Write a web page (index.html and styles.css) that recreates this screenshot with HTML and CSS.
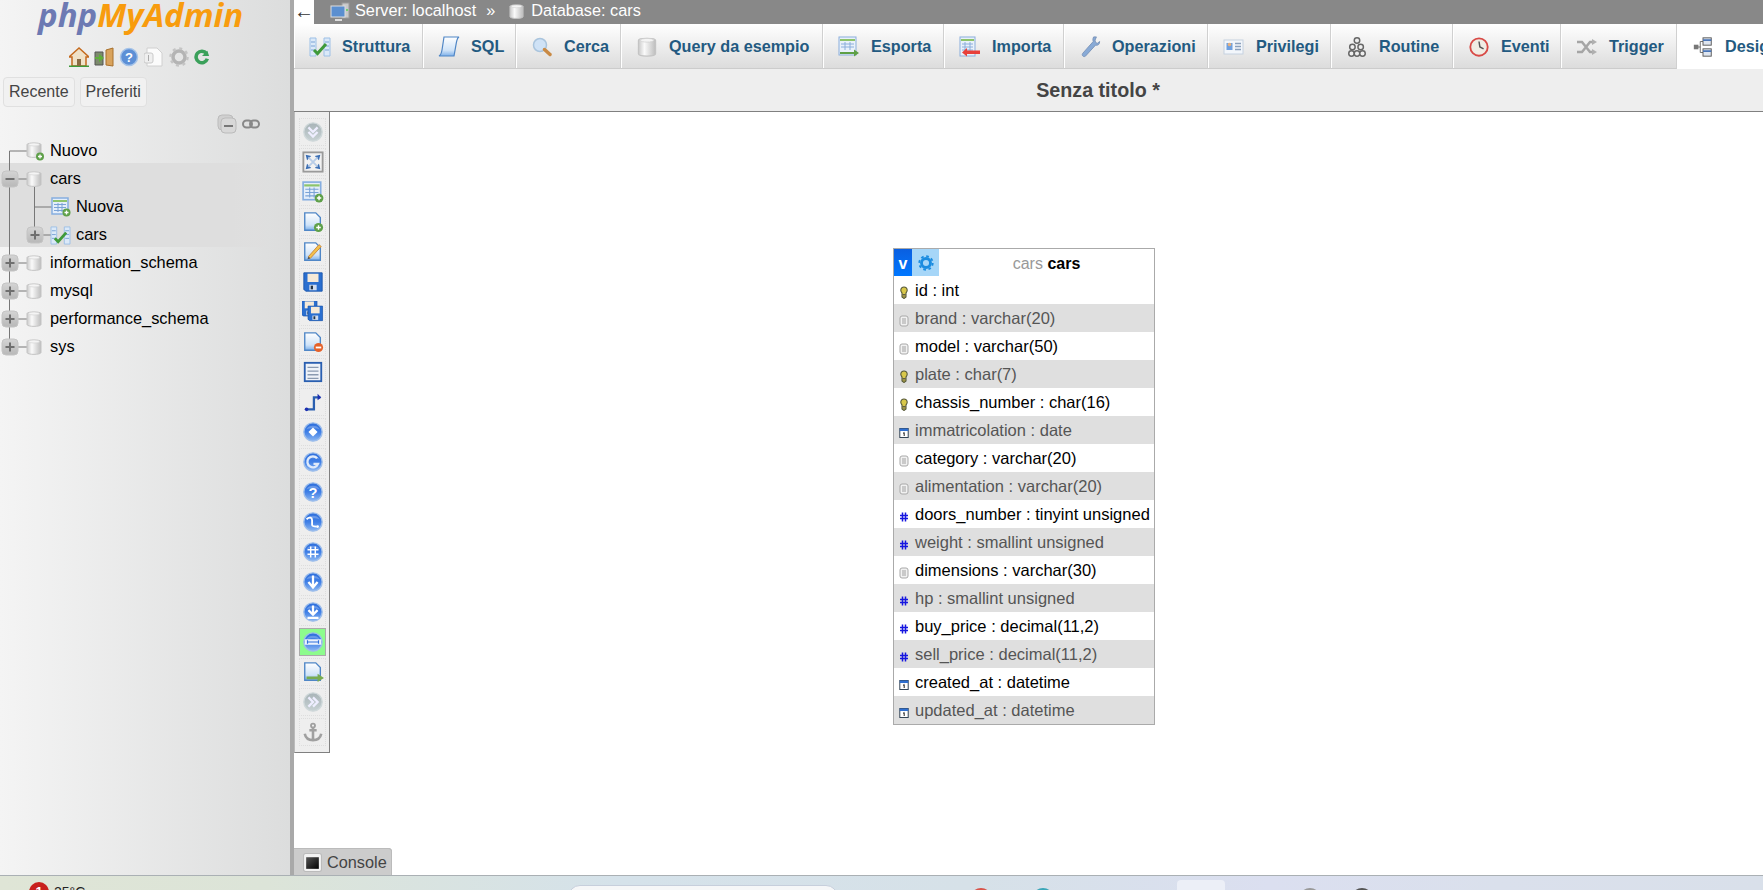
FILE: index.html
```html
<!DOCTYPE html>
<html lang="it">
<head>
<meta charset="utf-8">
<title>phpMyAdmin Designer</title>
<link rel="stylesheet" href="styles.css">
</head>
<body>
<svg class="defs" aria-hidden="true">
  <defs>
    <linearGradient id="gDb" x1="0" x2="1" y1="0" y2="0"><stop offset="0" stop-color="#c9c9c9"/><stop offset=".35" stop-color="#fafafa"/><stop offset="1" stop-color="#bdbdbd"/></linearGradient>
    <linearGradient id="gBall" x1="0" x2="0" y1="0" y2="1"><stop offset="0" stop-color="#2f6fdc"/><stop offset=".5" stop-color="#3f7fe6"/><stop offset="1" stop-color="#8db8f2"/></linearGradient>
    <linearGradient id="gGrey" x1="0" x2="0" y1="0" y2="1"><stop offset="0" stop-color="#a8b4b8"/><stop offset="1" stop-color="#c8d2d4"/></linearGradient>
    <linearGradient id="gPage" x1="0" x2="0" y1="0" y2="1"><stop offset="0" stop-color="#fff"/><stop offset=".7" stop-color="#cfe3f8"/><stop offset="1" stop-color="#7db0ea"/></linearGradient>
    <linearGradient id="gBox" x1="0" x2="0" y1="0" y2="1"><stop offset="0" stop-color="#d4d4d4"/><stop offset="1" stop-color="#b8b8b8"/></linearGradient>
    <linearGradient id="gCons" x1="0" x2="1" y1="0" y2="1"><stop offset="0" stop-color="#555"/><stop offset="1" stop-color="#000"/></linearGradient>
    <symbol id="db" viewBox="0 0 16 18"><path d="M1 3.500C1 1.500 15 1.500 15 3.500V14.500C15 17 1 17 1 14.500Z" fill="url(#gDb)" stroke="#c4c4c4"/><ellipse cx="8" cy="3.500" rx="5.500" ry="1.500" fill="#f4f4f4" stroke="#d0d0d0" stroke-width=".6"/></symbol>
    <symbol id="dbnew" viewBox="0 0 18 20"><path d="M1 3.500C1 1.500 15 1.500 15 3.500V14.500C15 17 1 17 1 14.500Z" fill="url(#gDb)" stroke="#c4c4c4"/><ellipse cx="8" cy="3.500" rx="5.500" ry="1.500" fill="#f4f4f4" stroke="#d0d0d0" stroke-width=".6"/><circle cx="14" cy="15.500" r="4" fill="#5fa04a"/><path d="M12 15.500h4M14 13.500v4" stroke="#fff" stroke-width="1.300"/></symbol>
    <symbol id="plus" viewBox="0 0 18 18"><rect x="1" y="1" width="16" height="16" rx="4" fill="url(#gBox)" stroke="#c4c4c4"/><path d="M4.500 9h9M9 4.500v9" stroke="#6f6f6f" stroke-width="2"/></symbol>
    <symbol id="minus" viewBox="0 0 18 18"><rect x="1" y="1" width="16" height="16" rx="4" fill="url(#gBox)" stroke="#c4c4c4"/><path d="M4.500 9h9" stroke="#6f6f6f" stroke-width="2"/></symbol>
    <symbol id="tblnew" viewBox="0 0 20 20"><rect x="1" y="1" width="16" height="16" fill="#e4eefa" stroke="#86aee0" stroke-width="1.500"/><path d="M2 4h14" stroke="#8dc46b" stroke-width="2"/><path d="M3 7.500h12M3 10.500h12M3 13.500h12M7 6v9M11 6v9" stroke="#7aa3d6"/><circle cx="15.500" cy="15.500" r="4" fill="#5fa04a"/><path d="M13.500 15.500h4M15.500 13.500v4" stroke="#fff" stroke-width="1.300"/></symbol>
    <symbol id="struct" viewBox="0 0 22 20"><path d="M1 1h6v18H1zM15 1h6v18h-6z" fill="#dbe9f8" stroke="#9dc0e6"/><path d="M2 5h4M2 9h4M2 13h4M16 5h4M16 9h4M16 13h4" stroke="#7aa3d6"/><path d="M5 13l3.500 3.500L17 7" fill="none" stroke="#3f9a3a" stroke-width="3"/></symbol>
    <symbol id="sql" viewBox="0 0 22 22"><path d="M6 1h15c-2 1-2 3-2.500 5L16 20H1c2-1 2.500-3 3-6Z" fill="url(#gPage)" stroke="#4f86c6" stroke-width="1.200"/></symbol>
    <symbol id="search" viewBox="0 0 22 22"><circle cx="9" cy="9" r="6.500" fill="#cfe2f6" stroke="#a9c4dd" stroke-width="1.500"/><path d="M13.500 13.500l5.500 5" stroke="#c98a45" stroke-width="3.500" stroke-linecap="round"/></symbol>
    <symbol id="export" viewBox="0 0 22 22"><rect x="1" y="1" width="17" height="18" fill="#e9f1fa" stroke="#8aaedb"/><path d="M2 4h15" stroke="#8dc46b" stroke-width="2"/><path d="M3 8h13M3 11h13M7 6v8M12 6v8" stroke="#8aaedb"/><path d="M2 16h14v-2.500l5 3.500-5 3.500V18H2z" fill="#5fa046"/></symbol>
    <symbol id="import" viewBox="0 0 22 22"><rect x="1" y="1" width="15" height="19" fill="#e9f1fa" stroke="#8aaedb"/><path d="M2 4h13" stroke="#8dc46b" stroke-width="2"/><path d="M3 8h11M3 11h11M3 14h11M6 6v12M11 6v12" stroke="#8aaedb"/><path d="M21 11v3.500h-13V12l-5 4.500 5 4V18h13z" fill="#e8403a"/></symbol>
    <symbol id="wrench" viewBox="0 0 22 24"><path d="M15 1c-1 2-1 3-.5 5L3 19c-1.500 2 1 4.500 3 3L17 10c3 .5 4.500-1 4.500-4L19 8l-2-1-.5-2.500L18 1Z" fill="#88aad6" stroke="#7a93b8"/></symbol>
    <symbol id="priv" viewBox="0 0 22 20"><rect x="1" y="3" width="19" height="14" fill="#f2f6fb" stroke="#c6d2e0"/><rect x="3.500" y="6" width="6" height="7" fill="#6fa0df"/><circle cx="6.500" cy="7.500" r="1.800" fill="#e7b17e"/><path d="M12 6.500h6M12 9.500h6M12 12.500h6" stroke="#8aa0bc" stroke-width="1.300"/></symbol>
    <symbol id="gears" viewBox="0 0 22 24"><g fill="#eee" stroke="#666" stroke-width="1.600"><circle cx="11" cy="5" r="3"/><circle cx="6" cy="12" r="3"/><circle cx="15" cy="12" r="3"/><circle cx="5" cy="19" r="3"/><circle cx="11" cy="19" r="3"/><circle cx="17" cy="19" r="3"/></g></symbol>
    <symbol id="clock" viewBox="0 0 22 24"><circle cx="11" cy="12" r="9.500" fill="#f0ece4" stroke="#d84a46" stroke-width="2"/><path d="M11 6l1 6 4 2" fill="none" stroke="#555" stroke-width="1.600"/></symbol>
    <symbol id="trigger" viewBox="0 0 22 20"><path d="M1 5h5l8 10h3M1 15h5l8-10h3" fill="none" stroke="#a5a5a5" stroke-width="2.500"/><path d="M16 2l5 3-5 3zM16 12l5 3-5 3z" fill="#b0b0b0"/></symbol>
    <symbol id="design" viewBox="0 0 22 24"><path d="M4 12h4M8 6v12M8 6h4M8 18h4" stroke="#666" fill="none"/><rect x="1" y="9.500" width="5" height="5" fill="#777"/><rect x="11" y="2" width="9" height="8" fill="#dfe6f0" stroke="#555"/><rect x="11" y="14" width="9" height="8" fill="#dfe6f0" stroke="#555"/><path d="M11 4.500h9M11 16.500h9" stroke="#4a76b8" stroke-width="2"/></symbol>
    <symbol id="ball" viewBox="0 0 24 24"><circle cx="12" cy="12" r="10" fill="url(#gBall)" stroke="#9dbdea" stroke-width="1.500"/><path d="M5 9c2-5 12-5 14 0-4-1.500-10-1.500-14 0z" fill="#fff" fill-opacity=".25"/></symbol>
    <symbol id="gball" viewBox="0 0 24 24"><circle cx="12" cy="12" r="10" fill="url(#gGrey)" stroke="#cfd8da" stroke-width="1.500"/></symbol>
    <symbol id="page" viewBox="0 0 24 24"><path d="M3 2h12l5 5v14H3z" fill="url(#gPage)" stroke="#4f86c6" stroke-width="1.500"/></symbol>
    <symbol id="floppy" viewBox="0 0 24 24"><path d="M2 2h20v20H4l-2-2z" fill="#2a6fd0" stroke="#1c56ac"/><rect x="6" y="3" width="12" height="9" fill="#f5e9d7"/><rect x="8" y="15" width="8" height="6" fill="#cfdcef"/><rect x="9.500" y="16" width="2.500" height="4" fill="#234"/></symbol>
    <symbol id="keyf" viewBox="0 0 10 13"><path d="M5 1a3.200 3.200 0 0 1 3.200 3.300c0 1.300-.7 2-1.200 2.700v4L5 12.500 3 11V7C2.500 6.300 1.800 5.600 1.800 4.300A3.200 3.200 0 0 1 5 1z" fill="#d9c84a" stroke="#55583a" stroke-width="1.100"/><path d="M3.500 8.500h3M3.500 10h3" stroke="#444" stroke-width=".8"/></symbol>
    <symbol id="txtf" viewBox="0 0 10 13"><rect x="1" y="2" width="8" height="10" rx="2" fill="#f1f1f1" stroke="#a9a9a9"/><path d="M3 5h4M3 7h4M3 9h4" stroke="#999" stroke-width=".9"/></symbol>
    <symbol id="numf" viewBox="0 0 10 13"><path d="M3.500 2.500v9M6.500 2.500v9M1 5.500h8M1 8.500h8" stroke="#1616e0" stroke-width="1.500"/></symbol>
    <symbol id="datef" viewBox="0 0 10 13"><rect x=".8" y="2.500" width="8.400" height="9" fill="#fff" stroke="#345"/><rect x=".8" y="2.500" width="8.400" height="2.500" fill="#2f6fd0"/><path d="M5.200 6.500v3.500M4 7.500l1.200-1" stroke="#222" stroke-width="1"/></symbol>
  </defs>
</svg>

<div class="app">
  <aside class="sidebar">
    <div class="logo"><span class="logo-php">php</span><span class="logo-my">MyAdmin</span></div>
    <div class="quick">
      <svg class="q-icon" viewBox="0 0 20 20"><path d="M10 1L0 10h3v9h14v-9h3z" fill="#f0e2c8" stroke="#c46a1e" stroke-width="1.500"/><path d="M0 19.500h20" stroke="#3f9a3a" stroke-width="2"/><rect x="8" y="12" width="4" height="7" fill="#8a6a42"/></svg>
      <svg class="q-icon" viewBox="0 0 20 20"><path d="M1 5h8v13H1z" fill="#7c8a6c" stroke="#555"/><path d="M12 3l7-2v18l-7-1z" fill="#d9a35c" stroke="#a8702c"/><path d="M1 10h4V7l5 4-5 4v-3H1z" fill="#5fae3a"/></svg>
      <svg class="q-icon" viewBox="0 0 20 20"><circle cx="10" cy="10" r="8.500" fill="#5c8fd6" stroke="#a5c3e8" stroke-width="1.500"/><text class="q-help" x="10" y="14.500">?</text></svg>
      <svg class="q-icon" viewBox="0 0 20 20"><path d="M3 1h10l5 5v13H3z" fill="#fbfbfb" stroke="#d0d0d0"/><rect x="0" y="6" width="9" height="10" rx="2" fill="#efefef" stroke="#c9c9c9"/><path d="M4.500 8v6" stroke="#aaa"/></svg>
      <svg class="q-icon" viewBox="0 0 20 20"><circle cx="10" cy="10" r="6" fill="none" stroke="#b4b4b4" stroke-width="3.500"/><circle cx="10" cy="10" r="8.500" fill="none" stroke="#c4c4c4" stroke-width="2.500" stroke-dasharray="3 3.670"/></svg>
      <svg class="q-icon q-reload" viewBox="0 0 18 20"><path d="M14 6a6.500 6.500 0 1 0 1 6" fill="none" stroke="#3aa05a" stroke-width="4"/><path d="M9 9h8l-2-6z" fill="#3aa05a"/></svg>
    </div>
    <div class="side-btns">
      <button class="side-btn" type="button">Recente</button>
      <button class="side-btn" type="button">Preferiti</button>
    </div>
    <div class="tree-tools">
      <svg class="tool-collapse" viewBox="0 0 20 20"><rect x="1" y="1" width="15" height="15" rx="4" fill="#d0d0d0" stroke="#bbb"/><rect x="4" y="4" width="15" height="15" rx="4" fill="#d8d8d8" stroke="#bbb"/><path d="M7 12h9" stroke="#777" stroke-width="2"/></svg>
      <svg class="tool-link" viewBox="0 0 18 10"><rect x="1" y="1.500" width="9" height="7" rx="3.500" fill="none" stroke="#888" stroke-width="2"/><rect x="8" y="1.500" width="9" height="7" rx="3.500" fill="none" stroke="#888" stroke-width="2"/></svg>
    </div>
    <ul class="tree">
      <li class="node">
        <svg class="gutter" viewBox="0 0 50 28"><path d="M9.500 14V28M9.500 14H27" stroke="#777" fill="none"/><use href="#dbnew" x="26" y="4" width="18" height="20"/></svg>
        <span>Nuovo</span>
      </li>
      <li class="node hl">
        <svg class="gutter" viewBox="0 0 50 28"><path d="M9.500 0V28M18 14H27M34.500 22V28" stroke="#777" fill="none"/><use href="#minus" x="1" y="5" width="18" height="18"/><use href="#db" x="26" y="5" width="16" height="18"/></svg>
        <span>cars</span>
      </li>
      <li class="node hl">
        <svg class="gutter deep" viewBox="0 0 76 28"><path d="M9.500 0V28M34.500 0V28M34.500 14H52" stroke="#777" fill="none"/><use href="#tblnew" x="51" y="4" width="20" height="20"/></svg>
        <span>Nuova</span>
      </li>
      <li class="node hl">
        <svg class="gutter deep" viewBox="0 0 76 28"><path d="M9.500 0V28M34.500 0V6M43 14H52" stroke="#777" fill="none"/><use href="#plus" x="26" y="5" width="18" height="18"/><use href="#struct" x="50" y="5" width="21" height="19"/></svg>
        <span>cars</span>
      </li>
      <li class="node">
        <svg class="gutter" viewBox="0 0 50 28"><path d="M9.500 0V28M18 14H27" stroke="#777" fill="none"/><use href="#plus" x="1" y="5" width="18" height="18"/><use href="#db" x="26" y="5" width="16" height="18"/></svg>
        <span>information_schema</span>
      </li>
      <li class="node">
        <svg class="gutter" viewBox="0 0 50 28"><path d="M9.500 0V28M18 14H27" stroke="#777" fill="none"/><use href="#plus" x="1" y="5" width="18" height="18"/><use href="#db" x="26" y="5" width="16" height="18"/></svg>
        <span>mysql</span>
      </li>
      <li class="node">
        <svg class="gutter" viewBox="0 0 50 28"><path d="M9.500 0V28M18 14H27" stroke="#777" fill="none"/><use href="#plus" x="1" y="5" width="18" height="18"/><use href="#db" x="26" y="5" width="16" height="18"/></svg>
        <span>performance_schema</span>
      </li>
      <li class="node">
        <svg class="gutter" viewBox="0 0 50 28"><path d="M9.500 0V6M18 14H27" stroke="#777" fill="none"/><use href="#plus" x="1" y="5" width="18" height="18"/><use href="#db" x="26" y="5" width="16" height="18"/></svg>
        <span>sys</span>
      </li>
    </ul>
  </aside>
  <div class="splitter"></div>
  <main class="main">
    <nav class="crumbs">
      <span class="back">←</span>
      <svg class="crumb-ico" viewBox="0 0 20 20"><rect x="12" y="1" width="7" height="15" fill="#c9c9c9" stroke="#999"/><rect x="1" y="4" width="14" height="11" fill="#5b8fd0" stroke="#ddd"/><path d="M5 18h7" stroke="#ddd" stroke-width="2"/><circle cx="17" cy="8" r="1" fill="#5c5"/></svg>
      <span class="crumb-a">Server: localhost</span>
      <span class="crumb-sep">»</span>
      <svg class="crumb-db"><use href="#db"/></svg>
      <span>Database: cars</span>
    </nav>
    <div class="tabs">
      <a class="tab"><svg class="t-ico"><use href="#struct"/></svg>Struttura</a>
      <a class="tab"><svg class="t-ico"><use href="#sql"/></svg>SQL</a>
      <a class="tab"><svg class="t-ico"><use href="#search"/></svg>Cerca</a>
      <a class="tab"><svg class="t-ico"><use href="#db"/></svg>Query da esempio</a>
      <a class="tab"><svg class="t-ico"><use href="#export"/></svg>Esporta</a>
      <a class="tab"><svg class="t-ico"><use href="#import"/></svg>Importa</a>
      <a class="tab"><svg class="t-ico"><use href="#wrench"/></svg>Operazioni</a>
      <a class="tab"><svg class="t-ico"><use href="#priv"/></svg>Privilegi</a>
      <a class="tab"><svg class="t-ico"><use href="#gears"/></svg>Routine</a>
      <a class="tab"><svg class="t-ico"><use href="#clock"/></svg>Eventi</a>
      <a class="tab"><svg class="t-ico"><use href="#trigger"/></svg>Trigger</a>
      <a class="tab active"><svg class="t-ico"><use href="#design"/></svg>Designer</a>
    </div>
    <h1 class="title">Senza titolo *</h1>
    <div class="canvas">
      <div class="toolbar">
        <div class="tb"><svg viewBox="0 0 24 24"><use href="#gball"/><path d="M7 7l5 5 5-5M7 12l5 5 5-5" fill="none" stroke="#eef" stroke-width="2.500"/></svg></div>
        <div class="tb"><svg viewBox="0 0 24 24"><rect x="1.500" y="1.500" width="21" height="21" fill="#f2f2f2" stroke="#9a9a9a" stroke-width="2"/><path d="M4 4l6 1.500L5.500 10zM20 4l-6 1.500L18.500 10zM4 20l6-1.500L5.500 14zM20 20l-6-1.500 4.500-4.500z" fill="#3c6fb4"/><path d="M7 7l10 10M17 7L7 17" stroke="#b8cde8" stroke-width="2"/></svg></div>
        <div class="tb"><svg viewBox="0 0 24 24"><use href="#tblnew"/></svg></div>
        <div class="tb"><svg viewBox="0 0 24 24"><use href="#page"/><circle cx="18" cy="18" r="5" fill="#5fa04a"/><path d="M15.500 18h5M18 15.500v5" stroke="#fff" stroke-width="1.500"/></svg></div>
        <div class="tb"><svg viewBox="0 0 24 24"><use href="#page"/><path d="M7 17l2 2 12-13-2.500-2z" fill="#f3c14b" stroke="#c9853a"/><path d="M7 17l-1 3 3-1z" fill="#555"/></svg></div>
        <div class="tb"><svg viewBox="0 0 24 24"><use href="#floppy"/></svg></div>
        <div class="tb"><svg viewBox="0 0 24 24"><use href="#floppy" x="-2" y="-2" width="20" height="20"/><use href="#floppy" x="5" y="4" width="19" height="19"/></svg></div>
        <div class="tb"><svg viewBox="0 0 24 24"><use href="#page"/><circle cx="18" cy="18" r="5" fill="#e5622a"/><path d="M15 18h6" stroke="#fff" stroke-width="2"/></svg></div>
        <div class="tb"><svg viewBox="0 0 24 24"><rect x="3" y="2" width="18" height="20" fill="#eef2f8" stroke="#2a5fb0" stroke-width="2"/><path d="M6 7h12M6 11h12M6 15h12M6 19h12" stroke="#8a9ab0" stroke-width="1.500"/></svg></div>
        <div class="tb"><svg viewBox="0 0 24 24"><path d="M5 20h8V7h7" fill="none" stroke="#2a5fb0" stroke-width="2.500"/><circle cx="5" cy="20" r="2" fill="#1c2fb0"/><path d="M17 3l4 4-4 3z" fill="#1c2fb0"/></svg></div>
        <div class="tb"><svg viewBox="0 0 24 24"><use href="#ball"/><path d="M12 7l5 5-5 5-5-5z" fill="#fff"/></svg></div>
        <div class="tb"><svg viewBox="0 0 24 24"><use href="#ball"/><path d="M16.500 8a6 6 0 1 0 1 6h-5" fill="none" stroke="#dfeafa" stroke-width="2.500"/></svg></div>
        <div class="tb"><svg viewBox="0 0 24 24"><use href="#ball"/><text class="tb-q" x="12" y="18">?</text></svg></div>
        <div class="tb"><svg viewBox="0 0 24 24"><use href="#ball"/><path d="M5 9c3-3 6-2 6 1v5c0 2 3 2 5 2" fill="none" stroke="#fff" stroke-width="2"/><circle cx="17" cy="17" r="1.500" fill="#fff"/></svg></div>
        <div class="tb"><svg viewBox="0 0 24 24"><use href="#ball"/><path d="M9.500 6v12M14.500 6v12M6 9.500h12M6 14.500h12" stroke="#fff" stroke-width="1.600"/></svg></div>
        <div class="tb"><svg viewBox="0 0 24 24"><use href="#ball"/><path d="M12 5v13M7 12l5 6 5-6" fill="none" stroke="#fff" stroke-width="2.500"/></svg></div>
        <div class="tb"><svg viewBox="0 0 24 24"><use href="#ball"/><path d="M12 5v10M7 10l5 5 5-5M6 18.500h12" fill="none" stroke="#fff" stroke-width="2.500"/></svg></div>
        <div class="tb on"><svg viewBox="0 0 24 24"><use href="#ball"/><rect x="3" y="9" width="18" height="6" fill="#fff" fill-opacity=".9"/><path d="M6 12h12M6 10v4M18 10v4" stroke="#2f6fdc" stroke-width="1.300"/></svg></div>
        <div class="tb"><svg viewBox="0 0 24 24"><use href="#page"/><path d="M5 17h12v-3l7 4.500-7 4.500v-3H5z" fill="#78ac50"/></svg></div>
        <div class="tb"><svg viewBox="0 0 24 24"><use href="#gball"/><path d="M7 7l5 5-5 5M12 7l5 5-5 5" fill="none" stroke="#eef" stroke-width="2.500"/></svg></div>
        <div class="tb"><svg viewBox="0 0 24 24"><circle cx="12" cy="5" r="2.200" fill="none" stroke="#a0a0a0" stroke-width="2"/><path d="M12 7v14M8 10h8M3 14c1 5 5 7 9 7s8-2 9-7" fill="none" stroke="#a0a0a0" stroke-width="2.800"/></svg></div>
      </div>

      <div class="dbtable">
        <div class="dbt-head">
          <span class="dbt-v">v</span>
          <span class="dbt-gear"><svg viewBox="0 0 20 20"><circle cx="10" cy="10" r="5" fill="none" stroke="#1b8ce0" stroke-width="3.200"/><circle cx="10" cy="10" r="7.500" fill="none" stroke="#1b8ce0" stroke-width="2" stroke-dasharray="3 2.890"/></svg></span>
          <span class="dbt-name"><span class="dbt-db">cars</span> <b>cars</b></span>
        </div>
        <div class="fld"><svg class="f-ico"><use href="#keyf"/></svg>id : int</div>
        <div class="fld"><svg class="f-ico"><use href="#txtf"/></svg>brand : varchar(20)</div>
        <div class="fld"><svg class="f-ico"><use href="#txtf"/></svg>model : varchar(50)</div>
        <div class="fld"><svg class="f-ico"><use href="#keyf"/></svg>plate : char(7)</div>
        <div class="fld"><svg class="f-ico"><use href="#keyf"/></svg>chassis_number : char(16)</div>
        <div class="fld"><svg class="f-ico"><use href="#datef"/></svg>immatricolation : date</div>
        <div class="fld"><svg class="f-ico"><use href="#txtf"/></svg>category : varchar(20)</div>
        <div class="fld"><svg class="f-ico"><use href="#txtf"/></svg>alimentation : varchar(20)</div>
        <div class="fld"><svg class="f-ico"><use href="#numf"/></svg>doors_number : tinyint unsigned</div>
        <div class="fld"><svg class="f-ico"><use href="#numf"/></svg>weight : smallint unsigned</div>
        <div class="fld"><svg class="f-ico"><use href="#txtf"/></svg>dimensions : varchar(30)</div>
        <div class="fld"><svg class="f-ico"><use href="#numf"/></svg>hp : smallint unsigned</div>
        <div class="fld"><svg class="f-ico"><use href="#numf"/></svg>buy_price : decimal(11,2)</div>
        <div class="fld"><svg class="f-ico"><use href="#numf"/></svg>sell_price : decimal(11,2)</div>
        <div class="fld"><svg class="f-ico"><use href="#datef"/></svg>created_at : datetime</div>
        <div class="fld"><svg class="f-ico"><use href="#datef"/></svg>updated_at : datetime</div>
      </div>

      <div class="console">
        <svg class="cons-ico" viewBox="0 0 18 18"><rect x=".5" y=".5" width="17" height="17" rx="2" fill="#f2f2f2" stroke="#bbb"/><rect x="3" y="4" width="12" height="11" fill="url(#gCons)"/></svg>
        <span>Console</span>
      </div>
    </div>
  </main>
</div>
<footer class="taskbar">
  <span class="tk-badge">1</span>
  <span class="tk-temp">25°C</span>
  <span class="tk-search"></span>
  <span class="tk-dot tk-red"></span>
  <span class="tk-dot tk-teal"></span>
  <span class="tk-active"></span>
  <span class="tk-dot tk-grey"></span>
  <span class="tk-dot tk-dark"></span>
</footer>
</body>
</html>
```
FILE: styles.css
```css
* { box-sizing: border-box; }
html, body { margin: 0; height: 890px; overflow: hidden; }
body {
  display: flex;
  flex-direction: column;
  font-family: "Liberation Sans", Arial, sans-serif;
  font-size: 16px;
  color: #000;
  background: #fff;
}
.defs { position: absolute; width: 0; height: 0; }

.app { display: flex; height: 875px; flex: none; }

/* Sidebar */
.sidebar {
  width: 290px;
  flex: none;
  display: flex;
  flex-direction: column;
  background: linear-gradient(90deg, #f4f4f4, #dcdddd);
  overflow: hidden;
}
.logo {
  height: 40px;
  padding-left: 38px;
  font-family: "Open Sans", sans-serif;
  font-weight: 700;
  font-style: italic;
  font-size: 33px;
  line-height: 29px;
  white-space: nowrap;
}
.logo-php { color: #6d7ab3; }
.logo-my { color: #f89c0e; }
.quick {
  height: 37px;
  padding: 7px 0 0 69px;
  display: flex;
  gap: 5px;
}
.q-icon { width: 20px; height: 20px; }
.q-reload { width: 16px; }
.q-help { font: 700 13px "Liberation Sans", sans-serif; fill: #fff; text-anchor: middle; }
.side-btns { display: flex; gap: 5px; padding-left: 3px; }
.side-btn {
  height: 30px;
  padding: 0 5px;
  background: #f1f1f1;
  border: 1px solid #e0e0e0;
  border-radius: 4px;
  font: 16px "Liberation Sans", sans-serif;
  color: #444;
}
.tree-tools {
  display: flex;
  align-items: center;
  gap: 5px;
  padding: 6px 0 0 217px;
  height: 28px;
}
.tool-collapse { width: 20px; height: 20px; }
.tool-link { width: 18px; height: 10px; }
.tree { list-style: none; margin: 0; padding: 0; font-size: 16.4px; }
.node { display: flex; align-items: center; height: 28px; }
.node span { padding-top: 3px; }
.node.hl { background: linear-gradient(90deg, #dedede 80%, rgba(222,222,222,0)); }
.gutter { width: 50px; height: 28px; flex: none; overflow: visible; transform: translateY(2px); }
.gutter.deep { width: 76px; }

.splitter { width: 4px; flex: none; background: #a9a9a9; }

/* Main */
.main {
  flex: 1;
  min-width: 0;
  display: flex;
  flex-direction: column;
  overflow: hidden;
  background: #fff;
}
.crumbs {
  flex: none;
  height: 24px;
  background: #888;
  color: #fff;
  display: flex;
  align-items: center;
  white-space: nowrap;
  line-height: 18px;
  padding-bottom: 5px;
  font-size: 16.3px;
}
.back {
  width: 20px;
  height: 24px;
  margin-bottom: -5px;
  background: #fff;
  color: #333;
  text-align: center;
  font-size: 20px;
  line-height: 22px;
  overflow: hidden;
}
.crumb-ico { width: 20px; height: 20px; margin: 4px 5px 0 16px; }
.crumb-a { margin-right: 10px; }
.crumb-sep { margin-right: 14px; }
.crumb-db { width: 15px; height: 17px; margin: 3px 7px 0 0; }

.tabs {
  flex: none;
  width: 1608px;
  height: 45px;
  display: grid;
  grid-template-columns: 129px 93px 105px 202px 121px 120px 144px 123px 122px 108px 116px 200px;
}
.tab {
  display: flex;
  align-items: center;
  gap: 11px;
  padding: 1px 0 0 15px;
  background: linear-gradient(#fff, #dcdcdc);
  border-right: 1px solid #d0d0d0;
  border-bottom: 1px solid #ccc;
  box-shadow: inset 1px 0 0 #fff;
  color: #235a81;
  font-size: 16.2px;
  font-weight: 700;
  white-space: nowrap;
}
.tab.active { background: #fff; border-bottom-color: #fff; }
.t-ico { width: 22px; height: 22px; flex: none; }

.title {
  flex: none;
  width: 1608px;
  height: 43px;
  margin: 0;
  background: #eee;
  border-bottom: 1px solid #808080;
  color: #444;
  font-size: 19.7px;
  font-weight: 700;
  line-height: 42px;
  text-align: center;
}

.canvas { position: relative; flex: 1; background: #fff; }

.toolbar {
  width: 36px;
  height: 641px;
  background: #eee;
  border: 1px solid #808080;
  border-top: 0;
  border-left-color: #bbb;
  padding: 6px 0 0 4px;
  display: flex;
  flex-direction: column;
  gap: 2px;
}
.tb {
  width: 27px;
  height: 28px;
  flex: none;
  border: 1px dotted #ddd;
  display: flex;
  align-items: center;
  justify-content: center;
}
.tb svg { width: 22px; height: 22px; }
.tb.on { background: #8dfc8d; border: 1px solid #aaa; }
.tb-q { font: 700 16px "Liberation Sans", sans-serif; fill: #fff; text-anchor: middle; }

.dbtable {
  position: absolute;
  left: 599px;
  top: 136px;
  width: 262px;
  background: #fff;
  border: 1px solid #aaa;
}
.dbt-head { display: flex; height: 27px; line-height: 30px; }
.dbt-v {
  width: 18px;
  background: linear-gradient(#0a5fe0, #0077ff);
  color: #fff;
  font-weight: 700;
  text-align: center;
}
.dbt-gear {
  width: 27px;
  background: #a6d6f8;
  display: flex;
  align-items: center;
  justify-content: center;
}
.dbt-gear svg { width: 18px; height: 18px; }
.dbt-name { flex: 1; text-align: center; }
.dbt-db { color: #999; }
.fld {
  height: 28px;
  padding: 1px 0 0 5px;
  display: flex;
  align-items: center;
  font-size: 16.5px;
  white-space: nowrap;
}
.fld:nth-of-type(odd) { background: #dfdfdf; color: #555; }
.f-ico { width: 10px; height: 13px; margin: 3px 6px 0 0; flex: none; }

.console {
  position: absolute;
  left: 0;
  bottom: 0;
  width: 98px;
  height: 27px;
  background: #ccc;
  border-radius: 0 4px 0 0;
  box-shadow: inset 0 1px 0 #bbb, inset -1px 0 0 #bbb;
  display: flex;
  align-items: center;
  gap: 5px;
  padding: 2px 0 0 9px;
  color: #444;
  font-size: 16.3px;
}
.cons-ico { width: 19px; height: 19px; }

/* Taskbar */
.taskbar {
  flex: none;
  height: 15px;
  display: flex;
  overflow: hidden;
  background: linear-gradient(90deg, #dfe5d6 0, #dce4d8 15%, #d5e2ea 35%, #d6e1e8 55%, #dbdff0 72%, #dae0ec 85%, #d9e0ea 100%);
  border-top: 1px solid #aab0b4;
}
.tk-badge {
  width: 20px;
  height: 20px;
  margin: 6px 0 0 29px;
  border-radius: 50%;
  background: #c8201c;
  color: #fff;
  font-size: 13px;
  font-weight: 700;
  line-height: 20px;
  text-align: center;
  flex: none;
}
.tk-temp { width: 36px; flex: none; margin: 8px 0 0 5px; font-size: 14px; line-height: 16px; color: #222; }
.tk-search {
  width: 270px;
  height: 24px;
  margin: 9px 0 0 478px;
  background: #f6f7f8;
  border: 1px solid #c7cfdc;
  border-radius: 12px;
  flex: none;
}
.tk-dot { width: 22px; height: 22px; border-radius: 50%; flex: none; margin-top: 12px; }
.tk-red { margin-left: 132px; background: #d8544a; }
.tk-teal { margin-left: 40px; background: #3ba6b8; }
.tk-active {
  width: 48px;
  height: 24px;
  margin: 4px 0 0 123px;
  background: #eceff7;
  border-radius: 4px;
  flex: none;
}
.tk-grey { margin-left: 74px; background: #9a9a9a; }
.tk-dark { margin-left: 30px; background: #555; }
```
